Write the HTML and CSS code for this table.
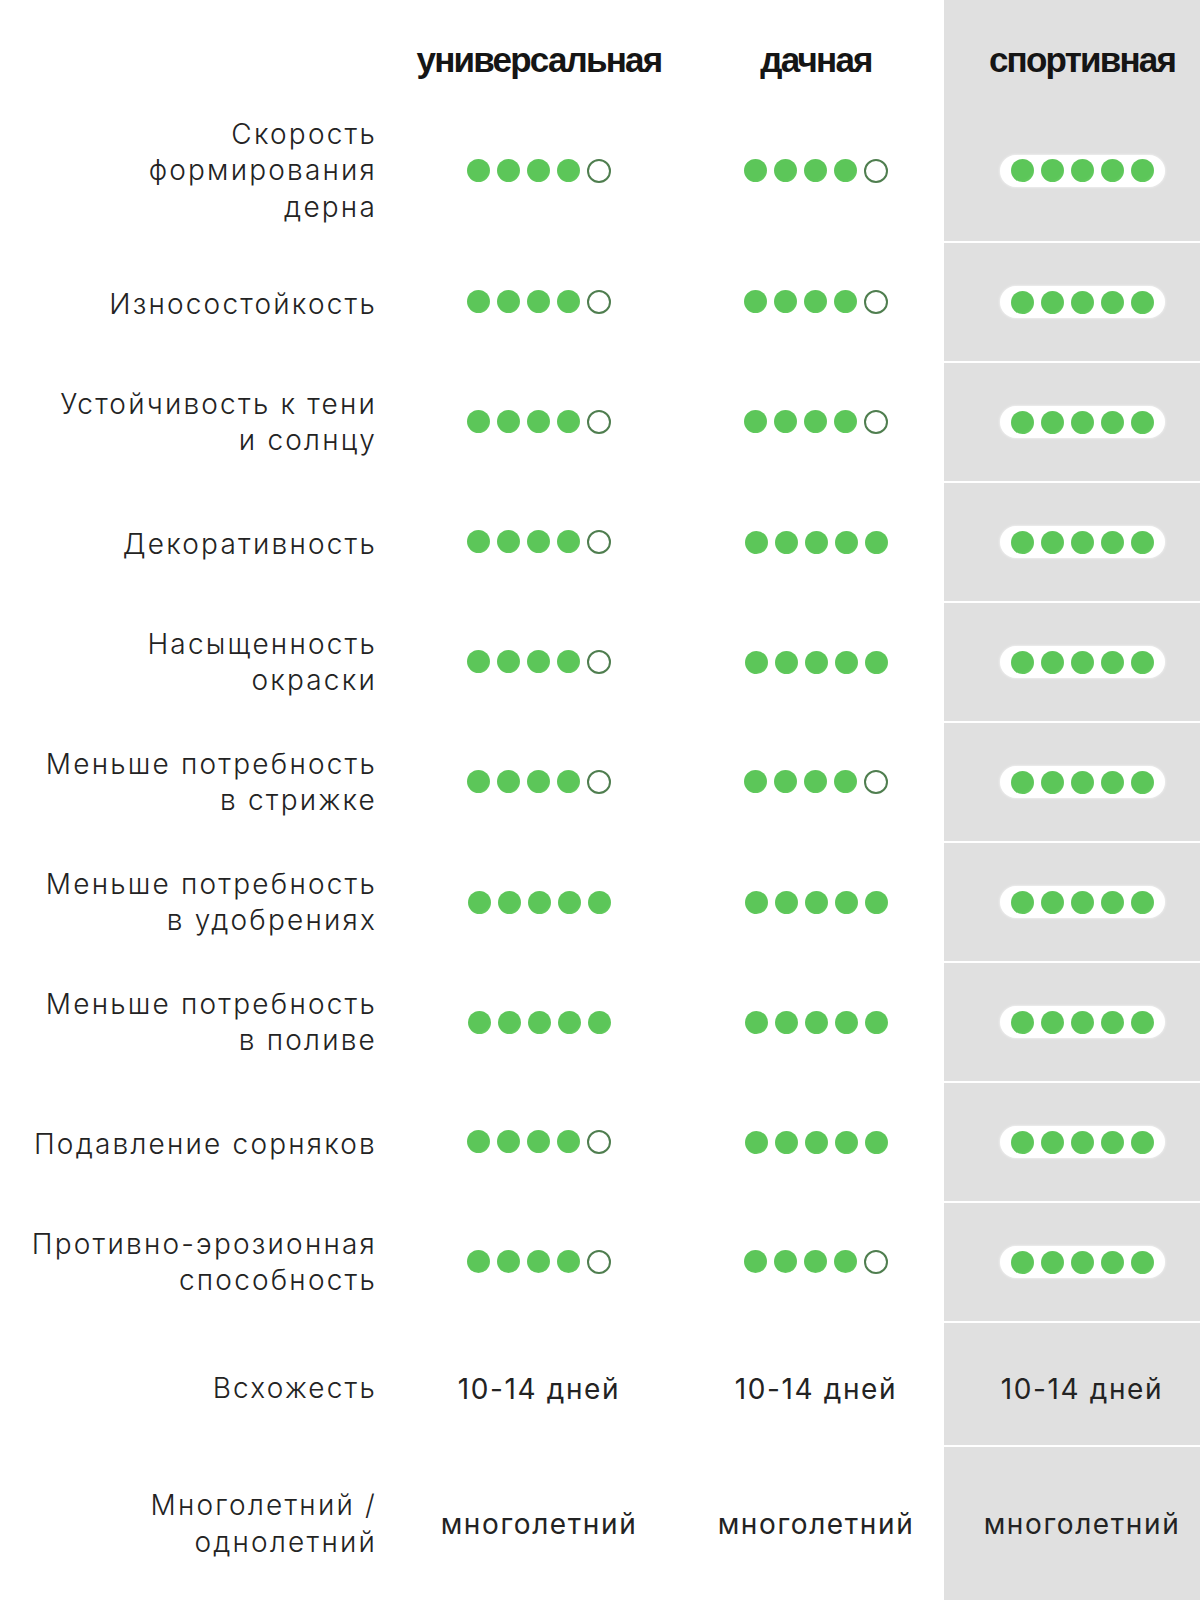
FILE: index.html
```html
<!DOCTYPE html>
<html lang="ru">
<head>
<meta charset="utf-8">
<title>Сравнение газонов</title>
<link rel="stylesheet" href="styles.css">
</head>
<body>
<div class="table">
  <div class="cell head"></div>
  <div class="cell head col"><span class="title">универсальная</span></div>
  <div class="cell head col"><span class="title">дачная</span></div>
  <div class="cell head col sport"><span class="title">спортивная</span></div>

  <div class="cell label first">Скорость<br>формирования<br>дерна</div>
  <div class="cell col first"><div class="dots"><i class="d"></i><i class="d"></i><i class="d"></i><i class="d"></i><i class="d o"></i></div></div>
  <div class="cell col first"><div class="dots"><i class="d"></i><i class="d"></i><i class="d"></i><i class="d"></i><i class="d o"></i></div></div>
  <div class="cell col sport first"><div class="dots pill"><i class="d"></i><i class="d"></i><i class="d"></i><i class="d"></i><i class="d"></i></div></div>

  <div class="cell label single">Износостойкость</div>
  <div class="cell col"><div class="dots"><i class="d"></i><i class="d"></i><i class="d"></i><i class="d"></i><i class="d o"></i></div></div>
  <div class="cell col"><div class="dots"><i class="d"></i><i class="d"></i><i class="d"></i><i class="d"></i><i class="d o"></i></div></div>
  <div class="cell col sport"><div class="dots pill"><i class="d"></i><i class="d"></i><i class="d"></i><i class="d"></i><i class="d"></i></div></div>

  <div class="cell label">Устойчивость к тени<br>и солнцу</div>
  <div class="cell col"><div class="dots"><i class="d"></i><i class="d"></i><i class="d"></i><i class="d"></i><i class="d o"></i></div></div>
  <div class="cell col"><div class="dots"><i class="d"></i><i class="d"></i><i class="d"></i><i class="d"></i><i class="d o"></i></div></div>
  <div class="cell col sport"><div class="dots pill"><i class="d"></i><i class="d"></i><i class="d"></i><i class="d"></i><i class="d"></i></div></div>

  <div class="cell label single">Декоративность</div>
  <div class="cell col"><div class="dots"><i class="d"></i><i class="d"></i><i class="d"></i><i class="d"></i><i class="d o"></i></div></div>
  <div class="cell col"><div class="dots"><i class="d"></i><i class="d"></i><i class="d"></i><i class="d"></i><i class="d"></i></div></div>
  <div class="cell col sport"><div class="dots pill"><i class="d"></i><i class="d"></i><i class="d"></i><i class="d"></i><i class="d"></i></div></div>

  <div class="cell label">Насыщенность<br>окраски</div>
  <div class="cell col"><div class="dots"><i class="d"></i><i class="d"></i><i class="d"></i><i class="d"></i><i class="d o"></i></div></div>
  <div class="cell col"><div class="dots"><i class="d"></i><i class="d"></i><i class="d"></i><i class="d"></i><i class="d"></i></div></div>
  <div class="cell col sport"><div class="dots pill"><i class="d"></i><i class="d"></i><i class="d"></i><i class="d"></i><i class="d"></i></div></div>

  <div class="cell label">Меньше потребность<br>в стрижке</div>
  <div class="cell col"><div class="dots"><i class="d"></i><i class="d"></i><i class="d"></i><i class="d"></i><i class="d o"></i></div></div>
  <div class="cell col"><div class="dots"><i class="d"></i><i class="d"></i><i class="d"></i><i class="d"></i><i class="d o"></i></div></div>
  <div class="cell col sport"><div class="dots pill"><i class="d"></i><i class="d"></i><i class="d"></i><i class="d"></i><i class="d"></i></div></div>

  <div class="cell label">Меньше потребность<br>в удобрениях</div>
  <div class="cell col"><div class="dots"><i class="d"></i><i class="d"></i><i class="d"></i><i class="d"></i><i class="d"></i></div></div>
  <div class="cell col"><div class="dots"><i class="d"></i><i class="d"></i><i class="d"></i><i class="d"></i><i class="d"></i></div></div>
  <div class="cell col sport"><div class="dots pill"><i class="d"></i><i class="d"></i><i class="d"></i><i class="d"></i><i class="d"></i></div></div>

  <div class="cell label">Меньше потребность<br>в поливе</div>
  <div class="cell col"><div class="dots"><i class="d"></i><i class="d"></i><i class="d"></i><i class="d"></i><i class="d"></i></div></div>
  <div class="cell col"><div class="dots"><i class="d"></i><i class="d"></i><i class="d"></i><i class="d"></i><i class="d"></i></div></div>
  <div class="cell col sport"><div class="dots pill"><i class="d"></i><i class="d"></i><i class="d"></i><i class="d"></i><i class="d"></i></div></div>

  <div class="cell label single">Подавление сорняков</div>
  <div class="cell col"><div class="dots"><i class="d"></i><i class="d"></i><i class="d"></i><i class="d"></i><i class="d o"></i></div></div>
  <div class="cell col"><div class="dots"><i class="d"></i><i class="d"></i><i class="d"></i><i class="d"></i><i class="d"></i></div></div>
  <div class="cell col sport"><div class="dots pill"><i class="d"></i><i class="d"></i><i class="d"></i><i class="d"></i><i class="d"></i></div></div>

  <div class="cell label">Противно-эрозионная<br>способность</div>
  <div class="cell col"><div class="dots"><i class="d"></i><i class="d"></i><i class="d"></i><i class="d"></i><i class="d o"></i></div></div>
  <div class="cell col"><div class="dots"><i class="d"></i><i class="d"></i><i class="d"></i><i class="d"></i><i class="d o"></i></div></div>
  <div class="cell col sport"><div class="dots pill"><i class="d"></i><i class="d"></i><i class="d"></i><i class="d"></i><i class="d"></i></div></div>

  <div class="cell label low">Всхожесть</div>
  <div class="cell col value low">10-14 дней</div>
  <div class="cell col value low">10-14 дней</div>
  <div class="cell col sport value low">10-14 дней</div>

  <div class="cell label">Многолетний /<br>однолетний</div>
  <div class="cell col value">многолетний</div>
  <div class="cell col value">многолетний</div>
  <div class="cell col sport value">многолетний</div>
</div>
</body>
</html>
```
FILE: styles.css
```css
html, body {
  margin: 0;
  padding: 0;
  background: #ffffff;
  overflow: hidden;
}

.table {
  display: grid;
  grid-template-columns: 390px 298px 256px 1fr;
  grid-template-rows: 100px 141px repeat(9, 120px) 124px 155px;
  width: 1200px;
  font-family: "Inter", "Liberation Sans", sans-serif;
  color: #232323;
}

.cell {
  display: flex;
  align-items: center;
  justify-content: center;
  border-top: 2px solid #ffffff;
  box-sizing: border-box;
}

.cell.head,
.cell.first {
  border-top: none;
}

.cell.head {
  align-items: flex-start;
  padding-top: 40px;
}

.col.sport {
  background: #e0e0e0;
  padding-left: 20px;
}

.title {
  font-family: "Liberation Sans", Arial, sans-serif;
  font-weight: 700;
  font-size: 35px;
  line-height: 40px;
  letter-spacing: -1.8px;
  color: #151515;
}

.label {
  justify-content: flex-end;
  text-align: right;
  padding-right: 13px;
  font-size: 28px;
  font-weight: 300;
  line-height: 36.5px;
  letter-spacing: 2.2px;
}

.label.single {
  padding-top: 5px;
}

.value {
  font-size: 28px;
  font-weight: 400;
  letter-spacing: 1.6px;
}

.low {
  padding-top: 9px;
}

.dots {
  display: flex;
  gap: 7px;
}

.pill {
  background: #ffffff;
  border-radius: 16px;
  padding: 4.5px 11px;
  box-shadow: 0 0 3px rgba(255, 255, 255, 0.8);
}

.d {
  display: block;
  width: 23px;
  height: 23px;
  border-radius: 50%;
  background: radial-gradient(circle at 40% 38%, #5cc659 0%, #5cc659 62%, #72d86b 100%);
  box-sizing: border-box;
}

.d.o {
  background: #ffffff;
  border: 2px solid #4f7e4f;
  width: 24px;
  height: 24px;
}
```
